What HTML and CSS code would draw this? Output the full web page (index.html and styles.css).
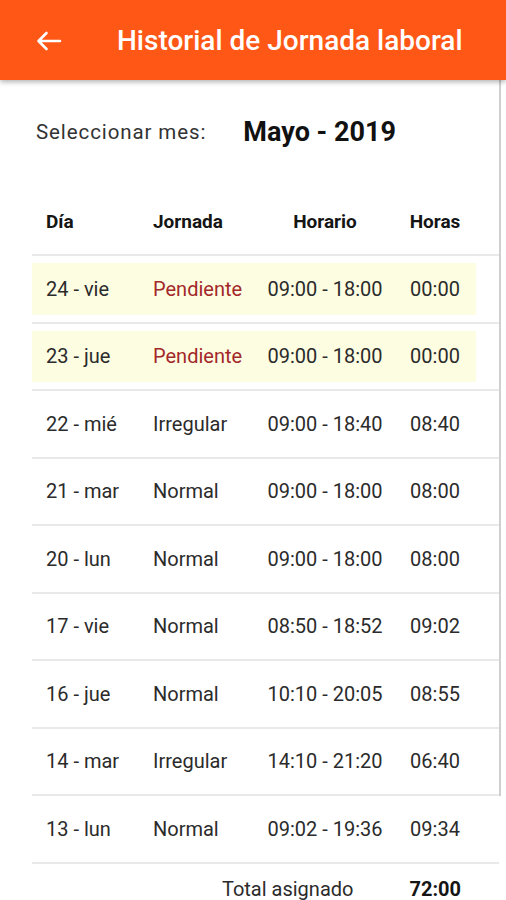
FILE: index.html
```html
<!DOCTYPE html>
<html lang="es">
<head>
  <meta charset="UTF-8" />
  <meta name="viewport" content="width=device-width, initial-scale=1.0"/>
  <title>Historial de Jornada laboral</title>
  <link rel="stylesheet" href="styles.css">
</head>
<body>
  <header class="appbar">
    <svg class="back" width="26" height="20" viewBox="0 0 26 20">
      <path d="M24 10H2.5M10.5 2L2.5 10l8 8" fill="none" stroke="#fff" stroke-width="2.6" stroke-linecap="round" stroke-linejoin="round"/>
    </svg>
    <h1 class="title">Historial de Jornada laboral</h1>
  </header>

  <div class="scroll">
    <div class="month">
      <span class="month-label">Seleccionar mes:</span>
      <span class="month-value">Mayo - 2019</span>
    </div>

    <div class="table">
      <div class="row head">
        <div class="cells">
          <span>Día</span><span>Jornada</span><span class="c">Horario</span><span class="c">Horas</span>
        </div>
      </div>
      <div class="row pending">
        <div class="cells">
          <span>24 - vie</span><span class="state">Pendiente</span><span class="c">09:00 - 18:00</span><span class="c">00:00</span>
        </div>
      </div>
      <div class="row pending">
        <div class="cells">
          <span>23 - jue</span><span class="state">Pendiente</span><span class="c">09:00 - 18:00</span><span class="c">00:00</span>
        </div>
      </div>
      <div class="row">
        <div class="cells">
          <span>22 - mié</span><span>Irregular</span><span class="c">09:00 - 18:40</span><span class="c">08:40</span>
        </div>
      </div>
      <div class="row">
        <div class="cells">
          <span>21 - mar</span><span>Normal</span><span class="c">09:00 - 18:00</span><span class="c">08:00</span>
        </div>
      </div>
      <div class="row">
        <div class="cells">
          <span>20 - lun</span><span>Normal</span><span class="c">09:00 - 18:00</span><span class="c">08:00</span>
        </div>
      </div>
      <div class="row">
        <div class="cells">
          <span>17 - vie</span><span>Normal</span><span class="c">08:50 - 18:52</span><span class="c">09:02</span>
        </div>
      </div>
      <div class="row">
        <div class="cells">
          <span>16 - jue</span><span>Normal</span><span class="c">10:10 - 20:05</span><span class="c">08:55</span>
        </div>
      </div>
      <div class="row">
        <div class="cells">
          <span>14 - mar</span><span>Irregular</span><span class="c">14:10 - 21:20</span><span class="c">06:40</span>
        </div>
      </div>
    </div>
  </div>

  <div class="table tail">
    <div class="row">
      <div class="cells">
        <span>13 - lun</span><span>Normal</span><span class="c">09:02 - 19:36</span><span class="c">09:34</span>
      </div>
    </div>
    <div class="total">
      <span>Total asignado</span>
      <b>72:00</b>
    </div>
  </div>
</body>
</html>
```

FILE: styles.css
```css
* {
  margin: 0;
  padding: 0;
  box-sizing: border-box;
}

body {
  font-family: Roboto, 'Liberation Sans', sans-serif;
  background: #fff;
  color: #2b2b2b;
  overflow: hidden;
}

.appbar {
  position: relative;
  z-index: 2;
  height: 80px;
  background: #ff5716;
  display: flex;
  align-items: center;
  box-shadow: 0 2px 5px rgba(0, 0, 0, 0.3);
}

.back {
  margin-left: 36px;
  margin-top: 2px;
}

.title {
  margin-left: 55px;
  color: #fff;
  font-size: 28px;
  font-weight: 500;
}

.scroll {
  width: 501px;
  border-right: 2px solid #cfcfcf;
  padding-top: 37px;
  padding-left: 32px;
}

.month {
  display: flex;
  align-items: center;
  height: 30px;
  margin-bottom: 48px;
  padding-left: 4px;
}

.month-label {
  font-size: 20.5px;
  color: #333;
  letter-spacing: 0.9px;
}

.month-value {
  margin-left: 37px;
  font-size: 27px;
  font-weight: 700;
  color: #111;
}

.table {
  width: 467px;
}

.tail {
  margin-left: 32px;
}

.row {
  border-bottom: 2px solid #e9e9e9;
}

.cells {
  display: grid;
  grid-template-columns: 107px 108px 128px 92px;
  align-items: center;
  height: 51.5px;
  margin: 7px 23px 7px 0;
  padding-left: 14px;
  font-size: 20px;
}

.cells .c {
  text-align: center;
}

.head .cells {
  height: 52px;
  font-weight: 700;
  font-size: 19px;
  color: #151515;
}

.pending .cells {
  background: #fdfde2;
}

.state {
  color: #a3282a;
}

.total {
  display: flex;
  justify-content: flex-end;
  align-items: center;
  gap: 56px;
  height: 50px;
  padding-right: 38px;
  font-size: 20px;
}

.total b {
  font-weight: 700;
  color: #151515;
}
```
